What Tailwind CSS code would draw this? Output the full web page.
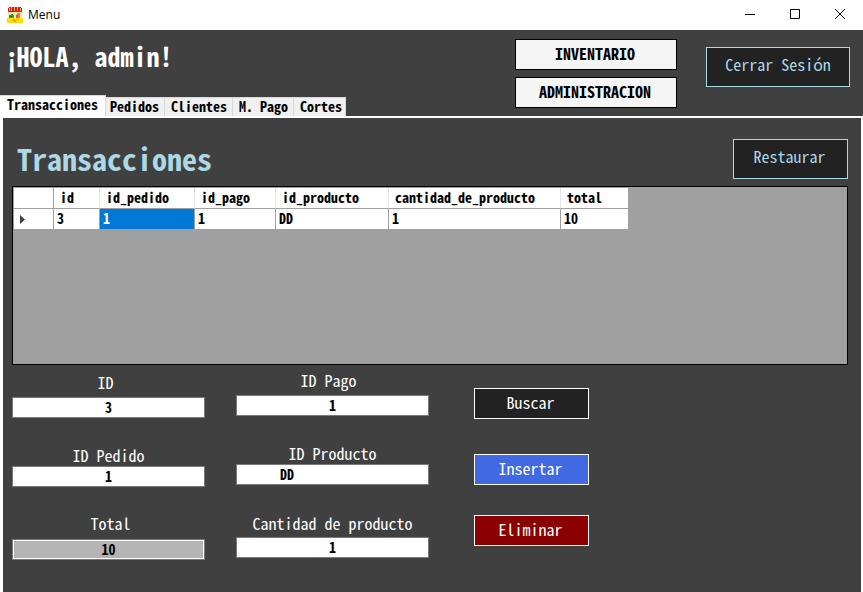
<!DOCTYPE html>
<html lang="es">
<head>
<meta charset="utf-8">
<meta name="viewport" content="width=device-width, initial-scale=1">
<title>Menu</title>
<script src="https://cdn.jsdelivr.net/npm/@tailwindcss/browser@4"></script>
</head>
<body class="flex min-h-screen flex-col bg-[#404040] font-['Noto_Sans_Mono_CJK_SC','DejaVu_Sans_Mono',monospace] text-white">

<div class="flex h-[30px] items-center bg-white pl-[7px] text-black">
  <svg class="size-4" viewBox="0 0 16 16" shape-rendering="crispEdges" aria-hidden="true">
    <path fill="#f3e3b4" d="M1 5h14v6H1z"/>
    <path fill="#e01414" d="M2 0h12v1h1v4H1V1h1z"/>
    <path fill="#ffc53a" d="M4 0h1v4H4zM7 0h1v4H7zM10 0h1v4h-1zM13 1h1v3h-1zM2 1h1v3H2z"/>
    <path fill="#2fa82a" d="M4 7h2v1h1v3H2V8h2z"/>
    <path fill="#146e14" d="M3 9h2v1H3z"/>
    <path fill="#f47b20" d="M10 6h3v5H9V8h1z"/>
    <path fill="#e8452c" d="M9 8h2v2H9z"/>
    <path fill="#ffdc0f" d="M0 11h16v5H0z"/>
    <path fill="#f79432" d="M6 12h2v2H6zM9 12h2v1H9z"/>
    <path fill="#9ccb2a" d="M8 13h1v2H7v-1h1z"/>
  </svg>
  <span class="ml-[5px] flex-1 font-['Open_Sans',sans-serif] text-xs">Menu</span>
  <div class="flex h-full">
    <button type="button" aria-label="Minimizar" class="flex w-[46px] items-center justify-center"><svg class="size-2.5" viewBox="0 0 10 10" fill="none" stroke="#000"><path d="M0 4.5h10"/></svg></button>
    <button type="button" aria-label="Maximizar" class="flex w-11 items-center justify-center pb-[2px]"><svg class="size-2.5" viewBox="0 0 10 10" fill="none" stroke="#000"><path d="M.5.5h9v9h-9z"/></svg></button>
    <button type="button" aria-label="Cerrar" class="flex w-[46px] items-center justify-center pb-[2px]"><svg class="size-2.5" viewBox="0 0 10 10" fill="none" stroke="#000"><path d="M0 0l10 10M10 0L0 10"/></svg></button>
  </div>
</div>

<header class="flex h-[86px] items-stretch justify-between">
  <div class="flex flex-col justify-between">
    <h1 class="pt-2.5 pl-[7px] text-[26px] leading-8 font-bold">¡HOLA, admin!</h1>
    <nav class="flex items-end text-sm leading-4 font-bold text-black">
      <a href="#transacciones" class="h-[21px] border-t border-r border-[#d9d9d9] bg-white px-[7px]">Transacciones</a>
      <a href="#pedidos" class="h-[19px] border-t border-r border-[#d9d9d9] bg-[#f0f0f0] pr-[5px] pl-1">Pedidos</a>
      <a href="#clientes" class="h-[19px] border-t border-r border-[#d9d9d9] bg-[#f0f0f0] pr-[5px] pl-1.5">Clientes</a>
      <a href="#pago" class="h-[19px] border-t border-r border-[#d9d9d9] bg-[#f0f0f0] pr-[5px] pl-1.5">M. Pago</a>
      <a href="#cortes" class="h-[19px] border-t border-r border-[#d9d9d9] bg-[#f0f0f0] pr-[3px] pl-1.5">Cortes</a>
    </nav>
  </div>
  <div class="flex items-start gap-[29px] pt-[9px] pr-[13px]">
    <div class="flex flex-col gap-[7px] text-base leading-5 font-bold text-black">
      <button type="button" class="h-[31px] w-[162px] border border-black bg-[#f5f5f5] pr-0.5 pb-1">INVENTARIO</button>
      <button type="button" class="h-[31px] w-[162px] border border-black bg-[#f5f5f5] pr-0.5 pb-1">ADMINISTRACION</button>
    </div>
    <button type="button" class="mt-2 h-10 w-36 border border-[#add8e6] bg-[#222222] pb-1.5 text-base text-[#add8e6]">Cerrar Sesión</button>
  </div>
</header>

<main id="transacciones" class="flex-1 border-t-2 border-r-2 border-l-[3px] border-white pr-[13px] pl-[9px]">
  <div class="flex items-start justify-between pt-[21px] pb-[7px]">
    <h2 class="pl-[5px] text-[30px] leading-[38px] font-bold text-[#add8e6]">Transacciones</h2>
    <button type="button" class="h-10 w-[115px] border border-[#add8e6] bg-[#222222] pr-0.5 pb-1.5 text-base text-[#add8e6]">Restaurar</button>
  </div>

  <div class="h-[179px] border border-black bg-[#a0a0a0] pt-px pl-px">
    <table class="w-[614px] table-fixed border-separate border-spacing-0 bg-white text-left text-sm leading-4 font-bold text-black">
      <colgroup><col class="w-10"><col class="w-[46px]"><col class="w-[95px]"><col class="w-[81px]"><col class="w-[113px]"><col class="w-[172px]"><col class="w-[67px]"></colgroup>
      <thead>
        <tr class="h-[21px]">
          <th class="border-r border-b border-[#a0a0a0] p-0"></th>
          <th class="border-r border-b border-r-[#e3e3e3] border-b-[#a0a0a0] p-0 pb-0.5 pl-1.5">id</th>
          <th class="border-r border-b border-r-[#e3e3e3] border-b-[#a0a0a0] p-0 pb-0.5 pl-1.5">id_pedido</th>
          <th class="border-r border-b border-r-[#e3e3e3] border-b-[#a0a0a0] p-0 pb-0.5 pl-1.5">id_pago</th>
          <th class="border-r border-b border-r-[#e3e3e3] border-b-[#a0a0a0] p-0 pb-0.5 pl-1.5">id_producto</th>
          <th class="border-r border-b border-r-[#e3e3e3] border-b-[#a0a0a0] p-0 pb-0.5 pl-1.5">cantidad_de_producto</th>
          <th class="border-b border-[#a0a0a0] p-0 pb-0.5 pl-1.5">total</th>
        </tr>
      </thead>
      <tbody>
        <tr class="h-5">
          <td class="border-r border-[#a0a0a0] p-0 pl-1.5"><svg class="block h-[9px] w-[5px]" viewBox="0 0 5 9" aria-label="Fila actual"><path fill="#404040" d="M0 0l5 4.5L0 9z"/></svg></td>
          <td class="border-r border-[#a0a0a0] p-0 pb-0.5 pl-[3px]">3</td>
          <td class="border-r border-[#a0a0a0] bg-[#0078d7] p-0 pb-0.5 pl-[3px] text-white">1</td>
          <td class="border-r border-[#a0a0a0] p-0 pb-0.5 pl-[3px]">1</td>
          <td class="border-r border-[#a0a0a0] p-0 pb-0.5 pl-[3px]">DD</td>
          <td class="border-r border-[#a0a0a0] p-0 pb-0.5 pl-[3px]">1</td>
          <td class="p-0 pb-0.5 pl-[3px]">10</td>
        </tr>
      </tbody>
    </table>
  </div>

  <form class="flex items-start text-base leading-4">
    <div class="flex w-[193px] flex-col pt-[9px] text-center">
      <label for="id" class="pr-1.5 pb-[7px]">ID</label>
      <input id="id" value="3" class="h-[21px] border border-[#7a7a7a] bg-white pb-0.5 text-center text-sm font-bold text-black">
      <label for="pedido" class="mt-[29px] pb-[3px]">ID Pedido</label>
      <input id="pedido" value="1" class="h-[21px] border border-[#7a7a7a] bg-white pb-0.5 text-center text-sm font-bold text-black">
      <label for="total" class="mt-7 pb-2 pl-1">Total</label>
      <input id="total" value="10" readonly class="h-[21px] border border-[#7a7a7a] bg-[#b4b4b4] pb-0.5 text-center text-sm font-bold text-black inset-ring inset-ring-white">
    </div>
    <div class="ml-[31px] flex w-[193px] flex-col pt-[7px] text-center">
      <label for="pago-id" class="pr-2 pb-[7px]">ID Pago</label>
      <input id="pago-id" value="1" class="h-[21px] border border-[#7a7a7a] bg-white pb-0.5 text-center text-sm font-bold text-black">
      <label for="producto" class="mt-[29px] pb-[3px]">ID Producto</label>
      <input id="producto" value="DD" class="h-[21px] border border-[#7a7a7a] bg-white pb-0.5 pl-[43px] text-sm font-bold text-black">
      <label for="cantidad" class="mt-[30px] pb-1.5">Cantidad de producto</label>
      <input id="cantidad" value="1" class="h-[21px] border border-[#7a7a7a] bg-white pb-0.5 text-center text-sm font-bold text-black">
    </div>
    <div class="ml-[45px] flex w-[115px] flex-col pt-[23px]">
      <button type="button" class="h-[31px] border border-white bg-[#222222] pr-0.5 pb-1">Buscar</button>
      <button type="button" class="mt-[35px] h-[31px] border border-white bg-[#4169e1] pr-0.5 pb-1">Insertar</button>
      <button type="button" class="mt-[30px] h-[31px] border border-white bg-[#8b0000] pr-0.5 pb-1">Eliminar</button>
    </div>
  </form>
</main>
</body>
</html>
